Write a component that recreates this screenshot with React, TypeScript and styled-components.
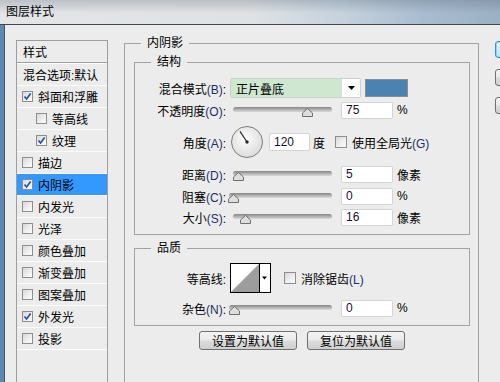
import styled, { createGlobalStyle } from "styled-components";

const GlobalStyle = createGlobalStyle`
  html, body {
    margin: 0;
    padding: 0;
    background: #ececec;
  }
  body {
    font-family: "Liberation Sans", "Noto Sans CJK SC", sans-serif;
    font-size: 12px;
    color: #000;
  }
  * {
    box-sizing: border-box;
  }
`;

const Window = styled.div`
  width: 500px;
  height: 382px;
  overflow: hidden;
  display: flex;
  flex-direction: column;
  background: #ececec;
`;

const TitleBar = styled.div`
  height: 25px;
  flex: none;
  display: flex;
  align-items: center;
  padding: 0 0 3px 6px;
  border-bottom: 1px solid #3d4853;
  background: linear-gradient(
      to bottom,
      rgba(70, 85, 100, 0.25) 0,
      rgba(255, 255, 255, 0) 55%
    ),
    linear-gradient(
      to right,
      #e3e5e7 0,
      #dfe2e5 250px,
      #c6d2de 340px,
      #aabdd0 420px,
      #9cb0c4 500px
    );
`;

const Body = styled.div`
  flex: 1;
  min-height: 0;
  display: flex;
  border-left: 4px solid #5d88b4;
`;

const Frame = styled.div`
  flex: 1;
  display: flex;
  align-items: flex-start;
  gap: 16px;
  padding-left: 11px;
  border-left: 1px solid #4b5560;
  background: #ececec;
  overflow: hidden;
`;

/* ---------- left style list ---------- */

const StyleList = styled.div`
  flex: none;
  width: 92px;
  height: 400px;
  margin-top: 15px;
  border: 1px solid #9d9d9d;
`;

const ListHeader = styled.div`
  height: 22px;
  display: flex;
  align-items: center;
  padding-left: 6px;
  border-bottom: 1px solid #9d9d9d;
`;

const ListRow = styled.div<{ $level?: number; $active?: boolean; $top?: boolean }>`
  height: ${(p) => (p.$top ? 23 : 22)}px;
  display: flex;
  align-items: center;
  padding-left: ${(p) => (p.$level ? 19 : 5)}px;
  border-top: ${(p) => (p.$top ? "1px solid #fff" : "none")};
  border-bottom: 1px solid #fbfbfb;
  background: ${(p) => (p.$active ? "#3399ff" : "transparent")};
  white-space: nowrap;
`;

const PlainRowText = styled.span`
  padding-left: 1px;
`;

const BoxWrap = styled.span<{ $size: number }>`
  flex: none;
  width: ${(p) => p.$size}px;
  height: ${(p) => p.$size}px;
  display: inline-flex;
  border: 1px solid #8d8e8f;
  background: linear-gradient(135deg, #d8d8d8 0%, #f0f0f0 60%, #fbfbfb 100%);
  margin-right: 5px;
`;

const Check = ({ on, size = 11 }: { on?: boolean; size?: number }) => (
  <BoxWrap $size={size}>
    {on && (
      <svg width={size - 2} height={size - 2} viewBox="0 0 9 9">
        <polyline
          points="1.5,4.5 3.6,7 7.6,1.6"
          fill="none"
          stroke="#2b4ea3"
          strokeWidth="1.7"
        />
      </svg>
    )}
  </BoxWrap>
);

/* ---------- groups ---------- */

const Group = styled.fieldset<{ $width?: number; $minH?: number; $mt?: number }>`
  flex: none;
  margin: ${(p) => p.$mt ?? 0}px 0 0 0;
  padding: 0;
  min-width: 0;
  width: ${(p) => (p.$width ? `${p.$width}px` : "auto")};
  min-height: ${(p) => p.$minH ?? 0}px;
  border: 1px solid #a3a3a3;
`;

const Legend = styled.legend`
  margin-left: 16px;
  padding: 0 6px;
  line-height: 14px;
  font-size: 12px;
`;

const GroupBody = styled.div<{ $pad: string }>`
  padding: ${(p) => p.$pad};
  display: flex;
  flex-direction: column;
`;

const Row = styled.div<{ $h: number; $mt?: number }>`
  display: grid;
  grid-template-columns: 91px auto;
  column-gap: 4px;
  align-items: center;
  height: ${(p) => p.$h}px;
  margin-top: ${(p) => p.$mt ?? 0}px;
`;

const Label = styled.span`
  text-align: right;
  white-space: nowrap;
`;

const Key = styled.span`
  color: #1f2f66;
`;

const Controls = styled.div`
  display: flex;
  align-items: center;
  white-space: nowrap;
`;

const Select = styled.div`
  width: 131px;
  height: 20px;
  display: flex;
  border: 1px solid #cfcfcf;
  border-radius: 2px;
  background: #fff;
`;

const SelectValue = styled.div`
  flex: 1;
  display: flex;
  align-items: center;
  padding-left: 5px;
  background: #cde8cf;
`;

const SelectArrow = styled.div`
  width: 18px;
  display: flex;
  align-items: center;
  justify-content: center;
`;

const Swatch = styled.div`
  width: 43px;
  height: 18px;
  margin-left: 4px;
  border: 1px solid #8c8c8c;
  background: #4a83b2;
`;

const SliderBox = styled.div`
  position: relative;
  width: 102px;
  height: 12px;
`;

const Track = styled.div<{ $inset: number }>`
  margin: 3px 0 0 ${(p) => p.$inset}px;
  height: 5px;
  border-radius: 3px;
  background: linear-gradient(to bottom, #858585, #b9b9b9 60%, #dadada);
`;

const Thumb = styled.svg`
  position: absolute;
  top: 4px;
`;

const Field = styled.div<{ $w: number; $h?: number; $ml: number }>`
  width: ${(p) => p.$w}px;
  height: ${(p) => p.$h ?? 17}px;
  margin-left: ${(p) => p.$ml}px;
  padding-left: 4px;
  display: flex;
  align-items: center;
  background: #fff;
  border: 1px solid #d4d4d4;
  border-radius: 2px;
  color: #1a1030;
`;

const Unit = styled.span<{ $ml?: number }>`
  margin-left: ${(p) => p.$ml ?? 4}px;
`;

const Dial = styled.svg`
  margin-left: 1px;
`;

const Inline = styled.span<{ $ml: number }>`
  display: inline-flex;
  align-items: center;
  margin-left: ${(p) => p.$ml}px;
`;

const ButtonRow = styled.div`
  display: flex;
  justify-content: center;
  gap: 10px;
  margin-top: 5px;
`;

const Button = styled.button`
  width: 98px;
  height: 19px;
  padding: 0;
  font-family: "Liberation Sans", "Noto Sans CJK SC", sans-serif;
  font-size: 12px;
  color: #000;
  border: 1px solid #707070;
  border-radius: 3px;
  background: linear-gradient(
    to bottom,
    #f3f3f3 0,
    #ebebeb 48%,
    #dcdcdc 52%,
    #cfcfcf 100%
  );
`;

const SideColumn = styled.div`
  flex: none;
  display: flex;
  flex-direction: column;
  gap: 11px;
  margin-top: 16px;
`;

const SideButton = styled.div<{ $focus?: boolean }>`
  width: 80px;
  height: 17px;
  border: 1px solid ${(p) => (p.$focus ? "#3c8fd6" : "#707070")};
  border-radius: 3px;
  background: ${(p) =>
    p.$focus
      ? "linear-gradient(to bottom, #eaf6fd, #bee6fd)"
      : "linear-gradient(to bottom, #f3f3f3, #ebebeb 48%, #dcdcdc 52%, #cfcfcf)"};
  box-shadow: ${(p) => (p.$focus ? "inset 0 0 0 1px #8fd3f7" : "none")};
`;

const Slider = ({ inset, thumb }: { inset: number; thumb: number }) => (
  <SliderBox>
    <Track $inset={inset} />
    <Thumb width="11" height="9" viewBox="0 0 11 9" style={{ left: thumb }}>
      <polygon
        points="5.5,0.5 10.5,5 10.5,8.5 0.5,8.5 0.5,5"
        fill="#dedede"
        stroke="#6f6f6f"
      />
    </Thumb>
  </SliderBox>
);

const listItems: { name: string; level?: number; on?: boolean; active?: boolean }[] = [
  { name: "斜面和浮雕", on: true },
  { name: "等高线", level: 1 },
  { name: "纹理", level: 1, on: true },
  { name: "描边" },
  { name: "内阴影", on: true, active: true },
  { name: "内发光" },
  { name: "光泽" },
  { name: "颜色叠加" },
  { name: "渐变叠加" },
  { name: "图案叠加" },
  { name: "外发光", on: true },
  { name: "投影" },
];

export default function App() {
  return (
    <Window>
      <GlobalStyle />
      <TitleBar>图层样式</TitleBar>
      <Body>
        <Frame>
          <StyleList>
            <ListHeader>样式</ListHeader>
            <ListRow $top>
              <PlainRowText>混合选项:默认</PlainRowText>
            </ListRow>
            {listItems.map((item) => (
              <ListRow key={item.name} $level={item.level} $active={item.active}>
                <Check on={item.on} />
                {item.name}
              </ListRow>
            ))}
          </StyleList>

          <Group $width={355} $minH={380} $mt={11}>
            <Legend>内阴影</Legend>
            <GroupBody $pad="5px 8px 0 9px">
              <Group>
                <Legend>结构</Legend>
                <GroupBody $pad="9px 0 7px 0">
                  <Row $h={20}>
                    <Label>
                      混合模式<Key>(B)</Key>:
                    </Label>
                    <Controls>
                      <Select>
                        <SelectValue>正片叠底</SelectValue>
                        <SelectArrow>
                          <svg width="7" height="4" viewBox="0 0 7 4">
                            <polygon points="0,0 7,0 3.5,4" fill="#000" />
                          </svg>
                        </SelectArrow>
                      </Select>
                      <Swatch />
                    </Controls>
                  </Row>
                  <Row $h={20} $mt={2}>
                    <Label>
                      不透明度<Key>(O)</Key>:
                    </Label>
                    <Controls>
                      <Slider inset={3} thumb={72} />
                      <Field $w={52} $ml={9}>75</Field>
                      <Unit>%</Unit>
                    </Controls>
                  </Row>
                  <Row $h={32} $mt={6}>
                    <Label>
                      角度<Key>(A)</Key>:
                    </Label>
                    <Controls>
                      <Dial width="32" height="32" viewBox="0 0 32 32">
                        <defs>
                          <radialGradient id="dialFill" cx="45%" cy="40%" r="65%">
                            <stop offset="0" stopColor="#fdfdfd" />
                            <stop offset="1" stopColor="#d9d9d9" />
                          </radialGradient>
                        </defs>
                        <circle cx="16" cy="16" r="15.5" fill="url(#dialFill)" stroke="#7e7e7e" />
                        <line x1="16" y1="16" x2="9" y2="5.4" stroke="#2a2a2a" strokeWidth="1.2" />
                        <circle cx="16" cy="16" r="1.7" fill="#2a2a2a" />
                      </Dial>
                      <Field $w={41} $h={18} $ml={6}>120</Field>
                      <Unit $ml={3}>度</Unit>
                      <Inline $ml={10}>
                        <Check size={12} />
                        <span>
                          使用全局光<Key>(G)</Key>
                        </span>
                      </Inline>
                    </Controls>
                  </Row>
                  <Row $h={20} $mt={6}>
                    <Label>
                      距离<Key>(D)</Key>:
                    </Label>
                    <Controls>
                      <Slider inset={3} thumb={3} />
                      <Field $w={52} $ml={9}>5</Field>
                      <Unit>像素</Unit>
                    </Controls>
                  </Row>
                  <Row $h={20} $mt={2}>
                    <Label>
                      阻塞<Key>(C)</Key>:
                    </Label>
                    <Controls>
                      <Slider inset={-1} thumb={-2} />
                      <Field $w={52} $ml={9}>0</Field>
                      <Unit>%</Unit>
                    </Controls>
                  </Row>
                  <Row $h={20} $mt={1}>
                    <Label>
                      大小<Key>(S)</Key>:
                    </Label>
                    <Controls>
                      <Slider inset={3} thumb={10} />
                      <Field $w={52} $ml={9}>16</Field>
                      <Unit>像素</Unit>
                    </Controls>
                  </Row>
                </GroupBody>
              </Group>

              <Group $mt={6}>
                <Legend>品质</Legend>
                <GroupBody $pad="8px 0 7px 0">
                  <Row $h={30}>
                    <Label>等高线:</Label>
                    <Controls>
                      <svg width="41" height="30" viewBox="0 0 41 30">
                        <rect x="0.5" y="0.5" width="40" height="29" fill="#fff" stroke="#000" />
                        <polygon points="1,29 29,1 29,29" fill="#9d9d9d" />
                        <line x1="29.5" y1="0" x2="29.5" y2="30" stroke="#000" />
                        <polygon points="32,13.5 37,13.5 34.5,16.5" fill="#000" />
                      </svg>
                      <Inline $ml={13}>
                        <Check size={12} />
                        <span>
                          消除锯齿<Key>(L)</Key>
                        </span>
                      </Inline>
                    </Controls>
                  </Row>
                  <Row $h={20} $mt={5}>
                    <Label>
                      杂色<Key>(N)</Key>:
                    </Label>
                    <Controls>
                      <Slider inset={-1} thumb={-1} />
                      <Field $w={52} $ml={9}>0</Field>
                      <Unit>%</Unit>
                    </Controls>
                  </Row>
                </GroupBody>
              </Group>

              <ButtonRow>
                <Button>设置为默认值</Button>
                <Button>复位为默认值</Button>
              </ButtonRow>
            </GroupBody>
          </Group>

          <SideColumn>
            <SideButton $focus />
            <SideButton />
            <SideButton />
          </SideColumn>
        </Frame>
      </Body>
    </Window>
  );
}
